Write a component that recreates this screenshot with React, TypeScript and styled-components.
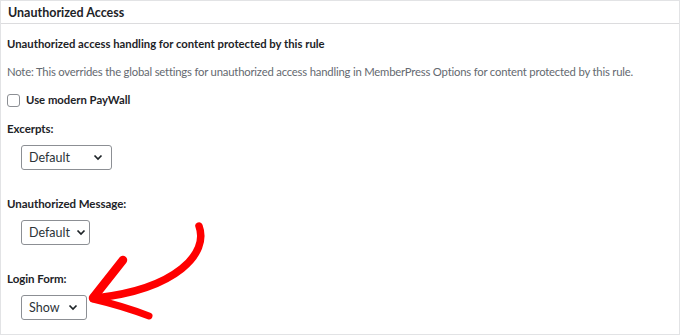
import React from "react";
import styled, { createGlobalStyle } from "styled-components";

const GlobalStyle = createGlobalStyle`
  html, body {
    margin: 0;
    padding: 0;
    background: #ffffff;
  }
  body {
    font-family: Lato, "Noto Sans", sans-serif;
    color: #1d2327;
  }
`;

const Panel = styled.div`
  position: relative;
  width: 680px;
  height: 335px;
  box-sizing: border-box;
  border: 1px solid #e2e3e5;
  background: #fff;
  overflow: hidden;
`;

const Header = styled.div`
  height: 22px;
  padding: 0 7px;
  display: flex;
  align-items: center;
  border-bottom: 1px solid #dcdcde;
  font-size: 12.5px;
  font-weight: 700;
`;

const Body = styled.div`
  padding: 11px 6px 0 6px;
  display: flex;
  flex-direction: column;
  white-space: nowrap;
`;

const Lead = styled.div`
  font-size: 11.3px;
  font-weight: 700;
  line-height: 18px;
`;

const Note = styled.div`
  margin-top: 10px;
  font-size: 11.3px;
  line-height: 18px;
  color: #646970;
  letter-spacing: -0.2px;
`;

const CheckRow = styled.label`
  margin-top: 10px;
  display: flex;
  align-items: center;
  gap: 6px;
  font-size: 11.3px;
  font-weight: 700;
  line-height: 18px;
`;

const CheckBox = styled.span`
  width: 13px;
  height: 13px;
  box-sizing: border-box;
  border: 1px solid #8c8f94;
  border-radius: 3px;
  background: #fff;
`;

const Field = styled.div<{ $gap: number }>`
  margin-top: ${(p) => p.$gap}px;
  display: flex;
  flex-direction: column;
  align-items: flex-start;
`;

const Label = styled.div`
  font-size: 11.5px;
  font-weight: 700;
  line-height: 18px;
  letter-spacing: -0.05px;
`;

const Select = styled.div<{ $width: number }>`
  margin: 7px 0 0 14px;
  width: ${(p) => p.$width}px;
  height: 25px;
  box-sizing: border-box;
  border: 1px solid #8c8f94;
  border-radius: 3px;
  display: flex;
  align-items: center;
  justify-content: space-between;
  gap: 6px;
  padding: 0 8px 0 7px;
  font-size: 12.5px;
  color: #2c3338;

  svg {
    flex-shrink: 0;
  }
`;

const Chevron = () => (
  <svg width="10" height="7" viewBox="0 0 10 7">
    <path d="M1.5 1.5 L5 5 L8.5 1.5" fill="none" stroke="#1d2327" strokeWidth="1.7" />
  </svg>
);

const Arrow = styled.svg`
  position: absolute;
  left: 0;
  top: 0;
  pointer-events: none;
`;

const App = () => (
  <>
    <GlobalStyle />
    <Panel>
      <Header>Unauthorized Access</Header>
      <Body>
        <Lead>Unauthorized access handling for content protected by this rule</Lead>
        <Note>
          Note: This overrides the global settings for unauthorized access handling in MemberPress Options for
          content protected by this rule.
        </Note>
        <CheckRow>
          <CheckBox />
          Use modern PayWall
        </CheckRow>
        <Field $gap={11}>
          <Label>Excerpts:</Label>
          <Select $width={91}>
            Default
            <Chevron />
          </Select>
        </Field>
        <Field $gap={25}>
          <Label>Unauthorized Message:</Label>
          <Select $width={69}>
            Default
            <Chevron />
          </Select>
        </Field>
        <Field $gap={25}>
          <Label>Login Form:</Label>
          <Select $width={66}>
            Show
            <Chevron />
          </Select>
        </Field>
      </Body>
      <Arrow width="680" height="335" viewBox="0 0 680 335">
        <g fill="none" stroke="#ff0000" strokeLinecap="round" strokeLinejoin="round">
          <path d="M198 225 C 208 252, 176 288, 95 297" strokeWidth="7.5" />
          <path d="M122 259 L 92 297" strokeWidth="8.5" />
          <path d="M92 298 Q 122 305 148 315" strokeWidth="7" />
        </g>
      </Arrow>
    </Panel>
  </>
);

export default App;
